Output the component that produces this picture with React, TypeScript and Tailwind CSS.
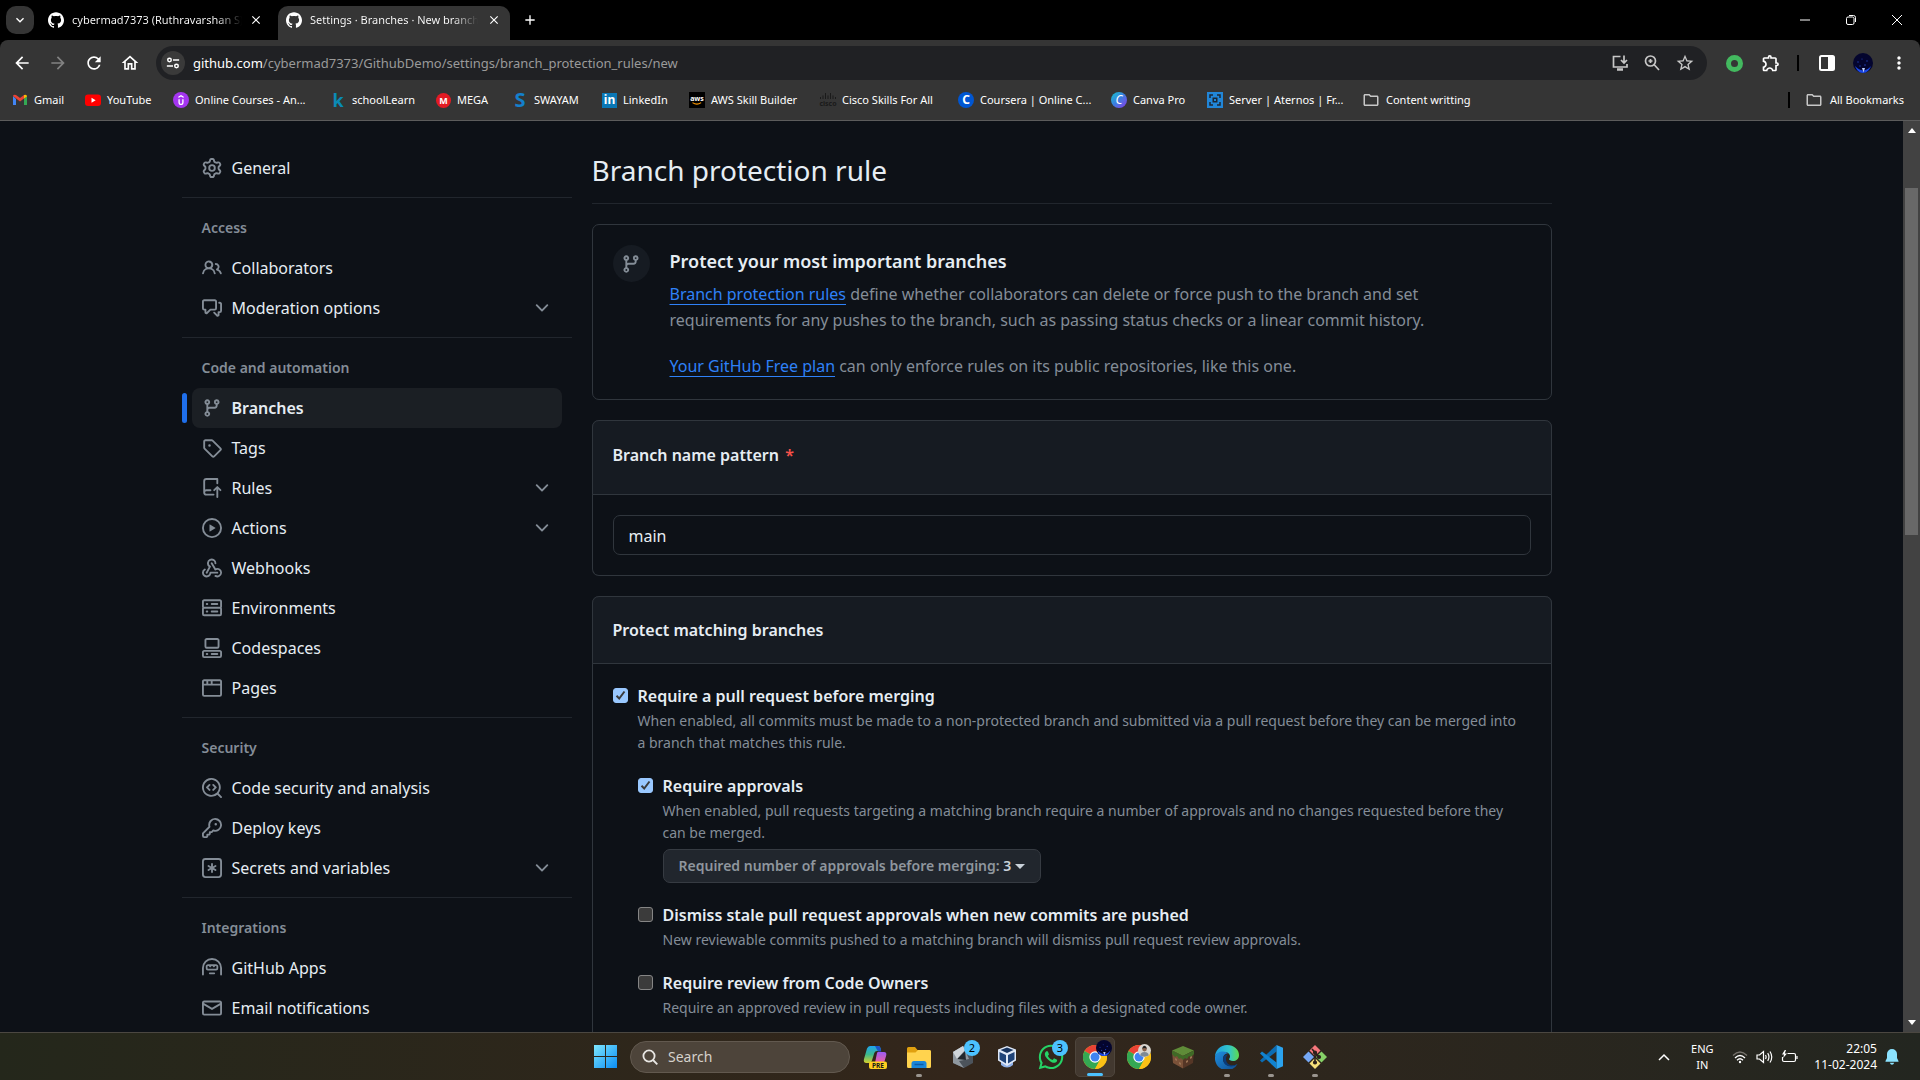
import React from "react";
import { SiGithub, SiUdemy } from "react-icons/si";
import { FaWhatsapp } from "react-icons/fa";
import {
  MdArrowBack,
  MdArrowForward,
  MdRefresh,
  MdOutlineHome,
  MdOutlineExtension,
  MdStarBorder,
  MdClose,
  MdAdd,
  MdMoreVert,
  MdExpandMore,
  MdOutlineFolder,
} from "react-icons/md";

/* ---------- sidebar icons (16 unit grid) ---------- */

const paths = {
  gear: "M8 0a8.2 8.2 0 0 1 .701.031C9.444.095 9.99.645 10.16 1.29l.288 1.107c.018.066.079.158.212.224.231.114.454.243.668.386.123.082.233.09.299.071l1.103-.303c.644-.176 1.392.021 1.82.63.27.385.506.792.704 1.218.315.675.111 1.422-.364 1.891l-.814.806c-.049.048-.098.147-.088.294.016.257.016.515 0 .772-.01.147.038.246.088.294l.814.806c.475.469.679 1.216.364 1.891a7.977 7.977 0 0 1-.704 1.217c-.428.61-1.176.807-1.82.63l-1.102-.302c-.067-.019-.177-.011-.3.071a5.909 5.909 0 0 1-.668.386c-.133.066-.194.158-.211.224l-.29 1.106c-.168.646-.715 1.196-1.458 1.26a8.006 8.006 0 0 1-1.402 0c-.743-.064-1.289-.614-1.458-1.26l-.289-1.106c-.018-.066-.079-.158-.212-.224a5.738 5.738 0 0 1-.668-.386c-.123-.082-.233-.09-.299-.071l-1.103.303c-.644.176-1.392-.021-1.82-.63a8.12 8.12 0 0 1-.704-1.218c-.315-.675-.111-1.422.363-1.891l.815-.806c.05-.048.098-.147.088-.294a6.214 6.214 0 0 1 0-.772c.01-.147-.038-.246-.088-.294l-.815-.806C.635 6.045.431 5.298.746 4.623a7.92 7.92 0 0 1 .704-1.217c.428-.61 1.176-.807 1.82-.63l1.102.302c.067.019.177.011.3-.071.214-.143.437-.272.668-.386.133-.066.194-.158.211-.224l.29-1.106C6.009.645 6.556.095 7.299.03 7.53.01 7.764 0 8 0Zm-.571 1.525c-.036.003-.108.036-.137.146l-.289 1.105c-.147.561-.549.967-.998 1.189-.173.086-.34.183-.5.29-.417.278-.97.423-1.529.27l-1.103-.303c-.109-.03-.175.016-.195.045-.22.312-.412.644-.573.99-.014.031-.021.11.059.19l.815.806c.411.406.562.957.53 1.456a4.709 4.709 0 0 0 0 .582c.032.499-.119 1.05-.53 1.456l-.815.806c-.081.08-.073.159-.059.19.162.346.353.677.573.989.02.03.085.076.195.046l1.102-.303c.56-.153 1.113-.008 1.53.27.161.107.328.204.501.29.447.222.85.629.997 1.189l.289 1.105c.029.109.101.143.137.146a6.6 6.6 0 0 0 1.142 0c.036-.003.108-.036.137-.146l.289-1.105c.147-.561.549-.967.998-1.189.173-.086.34-.183.5-.29.417-.278.97-.423 1.529-.27l1.103.303c.109.029.175-.016.195-.045.22-.313.411-.644.573-.99.014-.031.021-.11-.059-.19l-.815-.806c-.411-.406-.562-.957-.53-1.456a4.709 4.709 0 0 0 0-.582c-.032-.499.119-1.05.53-1.456l.815-.806c.081-.08.073-.159.059-.19a6.464 6.464 0 0 0-.573-.989c-.02-.03-.085-.076-.195-.046l-1.102.303c-.56.153-1.113.008-1.53-.27a4.44 4.44 0 0 0-.501-.29c-.447-.222-.85-.629-.997-1.189l-.289-1.105c-.029-.11-.101-.143-.137-.146a6.6 6.6 0 0 0-1.142 0ZM11 8a3 3 0 1 1-6 0 3 3 0 0 1 6 0ZM9.5 8a1.5 1.5 0 1 0-3.001.001A1.5 1.5 0 0 0 9.5 8Z",
  people: "M2 5.5a3.5 3.5 0 1 1 5.898 2.549 5.508 5.508 0 0 1 3.034 4.084.75.75 0 1 1-1.482.235 4 4 0 0 0-7.9 0 .75.75 0 0 1-1.482-.236A5.507 5.507 0 0 1 3.102 8.05 3.493 3.493 0 0 1 2 5.5ZM11 4a3.001 3.001 0 0 1 2.22 5.018 5.01 5.01 0 0 1 2.56 3.012.749.749 0 0 1-.885.954.752.752 0 0 1-.549-.514 3.507 3.507 0 0 0-2.522-2.372.75.75 0 0 1-.574-.73v-.352a.75.75 0 0 1 .416-.672A1.5 1.5 0 0 0 11 5.5.75.75 0 0 1 11 4Zm-5.5-.5a2 2 0 1 0-.001 3.999A2 2 0 0 0 5.5 3.5Z",
  comments: "M1.75 1h8.5c.966 0 1.75.784 1.75 1.75v5.5A1.75 1.75 0 0 1 10.25 10H7.061l-2.574 2.573A1.458 1.458 0 0 1 2 11.543V10h-.25A1.75 1.75 0 0 1 0 8.25v-5.5C0 1.784.784 1 1.75 1ZM1.5 2.75v5.5c0 .138.112.25.25.25h1a.75.75 0 0 1 .75.75v2.19l2.72-2.72a.749.749 0 0 1 .53-.22h3.5a.25.25 0 0 0 .25-.25v-5.5a.25.25 0 0 0-.25-.25h-8.5a.25.25 0 0 0-.25.25Zm13 2a.25.25 0 0 0-.25-.25h-.5a.75.75 0 0 1 0-1.5h.5c.966 0 1.75.784 1.75 1.75v5.5A1.75 1.75 0 0 1 14.25 12H14v1.543a1.458 1.458 0 0 1-2.487 1.03L9.22 12.28a.749.749 0 0 1 .326-1.275.749.749 0 0 1 .734.215l2.22 2.22v-2.19a.75.75 0 0 1 .75-.75h1a.25.25 0 0 0 .25-.25Z",
  branch: "M9.5 3.25a2.25 2.25 0 1 1 3 2.122V6A2.5 2.5 0 0 1 10 8.5H6a1 1 0 0 0-1 1v1.128a2.251 2.251 0 1 1-1.5 0V5.372a2.25 2.25 0 1 1 1.5 0v1.836A2.493 2.493 0 0 1 6 7h4a1 1 0 0 0 1-1v-.628A2.25 2.25 0 0 1 9.5 3.25Zm-6 0a.75.75 0 1 0 1.5 0 .75.75 0 0 0-1.5 0Zm8.25-.75a.75.75 0 1 0 0 1.5.75.75 0 0 0 0-1.5ZM4.25 12a.75.75 0 1 0 0 1.5.75.75 0 0 0 0-1.5Z",
  tag: "M1 7.775V2.75C1 1.784 1.784 1 2.75 1h5.025c.464 0 .91.184 1.238.513l6.25 6.25a1.75 1.75 0 0 1 0 2.474l-5.026 5.026a1.75 1.75 0 0 1-2.474 0l-6.25-6.25A1.752 1.752 0 0 1 1 7.775Zm1.5 0c0 .066.026.13.073.177l6.25 6.25a.25.25 0 0 0 .354 0l5.025-5.025a.25.25 0 0 0 0-.354l-6.25-6.25a.25.25 0 0 0-.177-.073H2.75a.25.25 0 0 0-.25.25ZM6 5a1 1 0 1 1 0 2 1 1 0 0 1 0-2Z",
  repoPush: "M1 2.5A2.5 2.5 0 0 1 3.5 0h8.75a.75.75 0 0 1 .75.75v3.5a.75.75 0 0 1-1.5 0V1.5h-8a1 1 0 0 0-1 1v6.708A2.493 2.493 0 0 1 3.5 9h3.25a.75.75 0 0 1 0 1.5H3.5a1 1 0 0 0 0 2h5.75a.75.75 0 0 1 0 1.5H3.5A2.5 2.5 0 0 1 1 11.5Zm13.23 7.79h-.001l-1.224-1.224v6.184a.75.75 0 0 1-1.5 0V9.066L10.28 10.29a.75.75 0 0 1-1.06-1.061l2.505-2.504a.75.75 0 0 1 1.06 0L15.29 9.23a.751.751 0 0 1-.018 1.042.751.751 0 0 1-1.042.018Z",
  play: "M8 0a8 8 0 1 1 0 16A8 8 0 0 1 8 0ZM1.5 8a6.5 6.5 0 1 0 13 0 6.5 6.5 0 0 0-13 0Zm4.879-2.773 4.264 2.559a.25.25 0 0 1 0 .428l-4.264 2.559A.25.25 0 0 1 6 10.559V5.442a.25.25 0 0 1 .379-.215Z",
  webhook: "M5.5 4.25a2.25 2.25 0 0 1 4.5 0 .75.75 0 0 0 1.5 0 3.75 3.75 0 1 0-6.14 2.889l-2.272 4.258a.75.75 0 0 0 1.324.706L7 7.25a.75.75 0 0 0-.309-1.015A2.25 2.25 0 0 1 5.5 4.25ZM7.364 3.607a.75.75 0 0 1 1.03.257l2.608 4.349a3.75 3.75 0 1 1-.628 6.785.75.75 0 0 1 .752-1.299 2.25 2.25 0 1 0-.033-3.88.75.75 0 0 1-1.03-.256L7.107 4.636a.75.75 0 0 1 .257-1.03ZM2.9 8.776A.75.75 0 0 1 2.625 9.8 2.25 2.25 0 1 0 6 11.75a.75.75 0 0 1 .75-.751h5.5a.75.75 0 0 1 0 1.5H7.425a3.751 3.751 0 1 1-5.55-3.998.75.75 0 0 1 1.024.274Z",
  server: "M1.75 1h12.5c.966 0 1.75.784 1.75 1.75v4c0 .372-.116.717-.314 1 .198.283.314.628.314 1v4a1.75 1.75 0 0 1-1.75 1.75H1.75A1.75 1.75 0 0 1 0 12.75v-4c0-.358.109-.707.314-1a1.739 1.739 0 0 1-.314-1v-4C0 1.784.784 1 1.75 1ZM1.5 2.75v4c0 .138.112.25.25.25h12.5a.25.25 0 0 0 .25-.25v-4a.25.25 0 0 0-.25-.25H1.75a.25.25 0 0 0-.25.25Zm.25 5.75a.25.25 0 0 0-.25.25v4c0 .138.112.25.25.25h12.5a.25.25 0 0 0 .25-.25v-4a.25.25 0 0 0-.25-.25ZM7 4.75A.75.75 0 0 1 7.75 4h4.5a.75.75 0 0 1 0 1.5h-4.5A.75.75 0 0 1 7 4.75ZM7.75 10h4.5a.75.75 0 0 1 0 1.5h-4.5a.75.75 0 0 1 0-1.5ZM3 4.75A.75.75 0 0 1 3.75 4h.5a.75.75 0 0 1 0 1.5h-.5A.75.75 0 0 1 3 4.75ZM3.75 10h.5a.75.75 0 0 1 0 1.5h-.5a.75.75 0 0 1 0-1.5Z",
  codespaces: "M0 11.25c0-.966.784-1.75 1.75-1.75h12.5c.966 0 1.75.784 1.75 1.75v3A1.75 1.75 0 0 1 14.25 16H1.75A1.75 1.75 0 0 1 0 14.25Zm2-9.5C2 .784 2.784 0 3.75 0h8.5C13.216 0 14 .784 14 1.75v5a1.75 1.75 0 0 1-1.75 1.75h-8.5A1.75 1.75 0 0 1 2 6.75Zm1.75-.25a.25.25 0 0 0-.25.25v5c0 .138.112.25.25.25h8.5a.25.25 0 0 0 .25-.25v-5a.25.25 0 0 0-.25-.25Zm-2 9.5a.25.25 0 0 0-.25.25v3c0 .138.112.25.25.25h12.5a.25.25 0 0 0 .25-.25v-3a.25.25 0 0 0-.25-.25ZM7 12.75a.75.75 0 0 1 .75-.75h4.5a.75.75 0 0 1 0 1.5h-4.5a.75.75 0 0 1-.75-.75Zm-4 0a.75.75 0 0 1 .75-.75h.5a.75.75 0 0 1 0 1.5h-.5a.75.75 0 0 1-.75-.75Z",
  browser: "M0 2.75C0 1.784.784 1 1.75 1h12.5c.966 0 1.75.784 1.75 1.75v10.5A1.75 1.75 0 0 1 14.25 15H1.75A1.75 1.75 0 0 1 0 13.25ZM14.5 6h-13v7.25c0 .138.112.25.25.25h12.5a.25.25 0 0 0 .25-.25Zm-6-3.5v2h6V2.75a.25.25 0 0 0-.25-.25ZM5 2.5v2h2v-2Zm-3.25 0a.25.25 0 0 0-.25.25V4.5h2v-2Z",
  codescan: "M8.47 4.97a.75.75 0 0 0 0 1.06L9.94 7.5 8.47 8.97a.75.75 0 1 0 1.06 1.06l2-2a.75.75 0 0 0 0-1.06l-2-2a.75.75 0 0 0-1.06 0ZM6.53 6.03a.75.75 0 0 0-1.06-1.06l-2 2a.75.75 0 0 0 0 1.06l2 2a.75.75 0 1 0 1.06-1.06L5.06 7.5l1.47-1.47ZM12.246 13.307a7.501 7.501 0 1 1 1.06-1.06l2.474 2.473a.749.749 0 0 1-.326 1.275.749.749 0 0 1-.734-.215ZM1.5 7.5a6.002 6.002 0 0 0 3.608 5.504 6.002 6.002 0 0 0 6.486-1.117.748.748 0 0 1 .292-.293A6 6 0 1 0 1.5 7.5Z",
  key: "M10.5 0a5.499 5.499 0 1 1-1.288 10.848l-.932.932a.749.749 0 0 1-.53.22H7v.75a.749.749 0 0 1-.22.53l-.5.5a.749.749 0 0 1-.53.22H5v.75a.749.749 0 0 1-.22.53l-.5.5a.749.749 0 0 1-.53.22h-2A1.75 1.75 0 0 1 0 14.25v-2c0-.199.079-.389.22-.53l4.932-4.932A5.5 5.5 0 0 1 10.5 0Zm-4 5.5c-.001.431.069.86.205 1.269a.75.75 0 0 1-.181.768L1.5 12.56v1.69c0 .138.112.25.25.25h1.69l.06-.06v-1.19a.75.75 0 0 1 .75-.75h1.19l.06-.06v-1.19a.75.75 0 0 1 .75-.75h1.19l1.023-1.025a.75.75 0 0 1 .768-.18A4 4 0 1 0 6.5 5.5ZM11 6a1 1 0 1 1 0-2 1 1 0 0 1 0 2Z",
  asterisk: "M0 2.75A2.75 2.75 0 0 1 2.75 0h10.5A2.75 2.75 0 0 1 16 2.75v10.5A2.75 2.75 0 0 1 13.25 16H2.75A2.75 2.75 0 0 1 0 13.25ZM2.75 1.5c-.69 0-1.25.56-1.25 1.25v10.5c0 .69.56 1.25 1.25 1.25h10.5c.69 0 1.25-.56 1.25-1.25V2.75c0-.69-.56-1.25-1.25-1.25ZM8 4a.75.75 0 0 1 .75.75V6.7l1.69-.975a.75.75 0 0 1 .75 1.3L9.5 8l1.69.976a.75.75 0 0 1-.75 1.298L8.75 9.3v1.951a.75.75 0 0 1-1.5 0V9.299l-1.69.976a.75.75 0 0 1-.75-1.3L6.5 8l-1.69-.975a.75.75 0 0 1 .75-1.3l1.69.976V4.75A.75.75 0 0 1 8 4Z",
  hubot: "M0 8a8 8 0 1 1 16 0v5.25a.75.75 0 0 1-1.5 0V8a6.5 6.5 0 1 0-13 0v5.25a.75.75 0 0 1-1.5 0V8Zm5.5 4.25a.75.75 0 0 1 .75-.75h3.5a.75.75 0 0 1 0 1.5h-3.5a.75.75 0 0 1-.75-.75ZM3 6.75C3 5.784 3.784 5 4.75 5h6.5c.966 0 1.75.784 1.75 1.75v1.5A1.75 1.75 0 0 1 11.25 10h-6.5A1.75 1.75 0 0 1 3 8.25Zm1.75-.35a.35.35 0 0 0-.35.35v1.5c0 .193.157.35.35.35h6.5a.35.35 0 0 0 .35-.35v-1.5a.35.35 0 0 0-.35-.35h-.55l-1.2 1.2-1.2-1.2h-.6l-1.2 1.2-1.2-1.2Z",
  mail: "M1.75 2h12.5c.966 0 1.75.784 1.75 1.75v8.5A1.75 1.75 0 0 1 14.25 14H1.75A1.75 1.75 0 0 1 0 12.25v-8.5C0 2.784.784 2 1.75 2ZM1.5 12.251c0 .138.112.25.25.25h12.5a.25.25 0 0 0 .25-.25V5.809L8.38 9.397a.75.75 0 0 1-.76 0L1.5 5.809v6.442Zm13-8.181v-.32a.25.25 0 0 0-.25-.25H1.75a.25.25 0 0 0-.25.25v.32L8 7.88Z",
  chevron: "M12.78 5.22a.749.749 0 0 1 0 1.06l-4.25 4.25a.749.749 0 0 1-1.06 0L3.22 6.28a.749.749 0 1 1 1.06-1.06L8 8.939l3.72-3.719a.749.749 0 0 1 1.06 0Z",
};

type IconName = keyof typeof paths;

function Icon({ name, className = "size-5" }: { name: IconName; className?: string }) {
  return (
    <svg viewBox="0 0 16 16" fill="currentColor" fillRule="evenodd" className={`shrink-0 ${className}`} aria-hidden="true">
      {name === "webhook" ? (
        paths.webhook.split(/(?<=Z)/).map((d) => <path key={d} d={d} />)
      ) : (
        <path d={paths[name]} />
      )}
    </svg>
  );
}

/* ---------- browser chrome ---------- */

function TabStrip() {
  return (
    <div className="flex h-10 items-center bg-black pl-[6px] text-white">
      <button aria-label="Search tabs" className="flex size-7 shrink-0 items-center justify-center rounded-[10px] bg-[#353535]">
        <MdExpandMore className="size-4" />
      </button>
      <div className="ml-[14px] flex w-[230px] shrink-0 items-center">
        <SiGithub className="size-4 shrink-0" />
        <span className="ml-2 w-[170px] overflow-hidden bg-gradient-to-r from-white from-85% to-transparent bg-clip-text text-[11px] leading-4 whitespace-nowrap text-transparent">
          cybermad7373 (Ruthravarshan S)
        </span>
        <button aria-label="Close tab" className="ml-[7px]">
          <MdClose className="size-[14px]" />
        </button>
      </div>
      <div className="flex h-[34px] w-[232px] shrink-0 items-center self-end rounded-t-[10px] bg-[#353535] pb-[6px] pl-2">
        <SiGithub className="size-4 shrink-0" />
        <span className="ml-2 w-[168px] overflow-hidden bg-gradient-to-r from-white from-85% to-transparent bg-clip-text text-[11px] leading-4 whitespace-nowrap text-transparent">
          Settings · Branches · New branch
        </span>
        <button aria-label="Close tab" className="ml-[9px]">
          <MdClose className="size-[14px]" />
        </button>
      </div>
      <button aria-label="New tab" className="ml-3">
        <MdAdd className="size-4" />
      </button>
      <div className="ml-auto flex items-center gap-[34px] pr-[17px]">
        <button aria-label="Minimize">
          <svg viewBox="0 0 12 12" className="size-3"><path d="M1 6h10" stroke="#fff" /></svg>
        </button>
        <button aria-label="Restore">
          <svg viewBox="0 0 12 12" className="size-3" fill="none" stroke="#fff"><rect x="1.5" y="3" width="7.5" height="7.5" rx="1.5" /><path d="M4 1.5h4.5a2 2 0 0 1 2 2V8" /></svg>
        </button>
        <button aria-label="Close">
          <svg viewBox="0 0 12 12" className="size-3" stroke="#fff"><path d="m1 1 10 10M11 1 1 11" /></svg>
        </button>
      </div>
    </div>
  );
}

function Toolbar() {
  return (
    <div className="bg-black">
      <div className="flex h-[46px] items-center rounded-t-lg bg-[#353535] pl-3 text-[#e8e8e8]">
        <div className="flex w-36 items-center gap-4">
          <button aria-label="Back"><MdArrowBack className="size-5 text-white" /></button>
          <button aria-label="Forward"><MdArrowForward className="size-5 text-[#828282]" /></button>
          <button aria-label="Reload"><MdRefresh className="size-5 text-white" /></button>
          <button aria-label="Home"><MdOutlineHome className="size-5 text-white" /></button>
        </div>
        <div className="flex h-[34px] flex-1 items-center rounded-full bg-[#202124] pr-3 pl-[5px]">
          <button aria-label="Site information" className="flex size-6 items-center justify-center rounded-full bg-[#3a3a3a]">
            <svg viewBox="0 0 16 16" className="size-[14px]" fill="none" stroke="#fff" strokeWidth="1.7">
              <circle cx="4" cy="4.5" r="2" /><path d="M8 4.5h7M1 11.5h7" /><circle cx="12" cy="11.5" r="2" />
            </svg>
          </button>
          <input
            aria-label="Address"
            className="sr-only"
            readOnly
            tabIndex={-1}
            value="github.com/cybermad7373/GithubDemo/settings/branch_protection_rules/new"
          />
          <span className="ml-2 text-[13px] leading-5 whitespace-nowrap text-[#9a9a9a]" aria-hidden="true">
            <span className="text-white">github.com</span>/cybermad7373/GithubDemo/settings/branch_protection_rules/new
          </span>
          <div className="ml-auto flex items-center gap-[14px] text-[#c7c7c7]">
            <button aria-label="Install app">
              <svg viewBox="0 0 18 18" className="size-[18px]" fill="none" stroke="currentColor" strokeWidth="1.7">
                <path d="M9.5 2.5H2.5v10.500h13.500V10M13 1.500v7M10 6l3 3 3-3" /><path d="M6 15.500h6" strokeWidth="2.5" />
              </svg>
            </button>
            <button aria-label="Zoom">
              <svg viewBox="0 0 18 18" className="size-[18px]" fill="none" stroke="currentColor" strokeWidth="1.7">
                <circle cx="7.5" cy="7" r="5" /><path d="m11 10.500 5 5.500M5.500 7h4M7.500 5v4" />
              </svg>
            </button>
            <button aria-label="Bookmark this tab"><MdStarBorder className="size-5" /></button>
          </div>
        </div>
        <div className="flex w-[213px] items-center pl-[19px]">
          <button aria-label="Extension"><span className="block size-[17px] rounded-full border-[5px] border-[#43b95f] bg-[#353535]" /></button>
          <button aria-label="Extensions" className="ml-[18px]"><MdOutlineExtension className="size-5 text-white" /></button>
          <span className="ml-4 h-4 w-[2px] bg-black" />
          <button aria-label="Side panel" className="ml-5">
            <svg viewBox="0 0 16 16" className="size-4"><rect x="1" y="1" width="14" height="14" rx="1.5" fill="none" stroke="#fff" strokeWidth="2" /><path d="M9 1h6v14H9z" fill="#fff" /></svg>
          </button>
          <button aria-label="Profile" className="ml-[18px]"><NightAvatar className="size-5" /></button>
          <button aria-label="Menu" className="ml-4"><MdMoreVert className="size-5 text-white" /></button>
        </div>
      </div>
    </div>
  );
}

function NightAvatar({ className }: { className: string }) {
  return (
    <svg viewBox="0 0 20 20" className={className} aria-hidden="true">
      <circle cx="10" cy="10" r="10" fill="#04052e" />
      <path d="M2 13c3 3 5 4 8 4.500 4-.5 6-2 8-4.500-1.500 4-4 7-8 7s-6.500-3-8-7Z" fill="#1b49e8" />
      <path d="m9 15 1.500 4.500L12 15Z" fill="#bcd0ff" />
      <g fill="#2342b8"><circle cx="5" cy="9" r=".7" /><circle cx="9" cy="6" r=".6" /><circle cx="14" cy="8" r=".7" /><circle cx="12" cy="12" r=".8" /><circle cx="7" cy="13" r=".7" /></g>
    </svg>
  );
}

const gmail = (
  <svg viewBox="0 0 16 16" className="size-4">
    <path d="M1 4v9h3V7z" fill="#4285f4" /><path d="M12 7v6h3V4z" fill="#34a853" />
    <path d="m1 4 7 5.500V6L4 3Q1.500 2 1 4Z" fill="#ea4335" /><path d="m12 3-4 3v3.500L12 6.500z" fill="#ea4335" /><path d="M12 3v3.700L15 4.400Q15 2 12 3Z" fill="#fbbc04" />
  </svg>
);
const youtube = (
  <svg viewBox="0 0 16 16" className="size-4"><rect y="2.5" width="16" height="11.5" rx="3" fill="#f00" /><path d="m6.500 5.700 4.200 2.500-4.200 2.500z" fill="#fff" /></svg>
);
const udemy = (
  <span className="flex size-4 items-center justify-center rounded-full bg-[#a435f0]"><SiUdemy className="size-[10px] text-white" /></span>
);
const kIcon = <span className="w-4 text-center text-lg leading-4 font-bold text-[#0a8ab5]">k</span>;
const mega = <span className="flex size-[15px] items-center justify-center rounded-full bg-[#e31b23] text-[9px] leading-none font-bold text-white">M</span>;
const swayam = <span className="w-4 text-center text-xl leading-4 font-bold text-[#1480cc]">S</span>;
const linkedin = <span className="flex size-[15px] items-center justify-center bg-[#0a77b5] text-xs leading-none font-bold text-white">in</span>;
const aws = (
  <span className="flex size-4 flex-col items-center justify-center bg-black text-[7px] leading-[7px] font-bold text-white">
    aws
    <svg viewBox="0 0 12 4" className="h-[3px] w-3" fill="none" stroke="#f90" strokeWidth="1.5"><path d="M0 .8Q6 5 11.500.8" /></svg>
  </span>
);
const cisco = (
  <span className="flex size-4 flex-col items-center justify-center text-[7px] leading-[7px] font-bold text-[#1a1a1a]">
    <svg viewBox="0 0 16 7" className="h-[7px] w-4" stroke="#1a1a1a"><path d="M.5 4v2M3 2.500V6M5.500 0v6M8 2.500V6M10.500 0v6M13 2.500V6M15.500 4v2" /></svg>
    cisco
  </span>
);
const coursera = <span className="flex size-4 items-center justify-center rounded-full bg-[#0056d2] text-xs leading-none font-bold text-white">C</span>;
const canva = <span className="flex size-4 items-center justify-center rounded-full bg-gradient-to-br from-[#00c4cc] via-[#3a7be0] to-[#7d2ae8] text-xs leading-none text-white italic">C</span>;
const aternos = (
  <svg viewBox="0 0 16 16" className="size-4"><path fill="#2186d8" d="M0 0h16v16H0z" /><path d="M3 6V3h3M10 3h3v3M13 10v3h-3M6 13H3v-3" fill="none" stroke="#1c2733" strokeWidth="1.5" /><path d="M5.500 5.500h5v5h-5z" fill="#1c2733" /><path d="M7 7h2v2H7z" fill="#2186d8" /></svg>
);
const folder = <MdOutlineFolder className="size-[18px] text-[#c7c7c7]" />;

const bookmarks = [
  { label: "Gmail", icon: gmail, width: "w-[73px]" },
  { label: "YouTube", icon: youtube, width: "w-[88px]" },
  { label: "Online Courses - An...", icon: udemy, width: "w-[157px]" },
  { label: "schoolLearn", icon: kIcon, width: "w-[106px]" },
  { label: "MEGA", icon: mega, width: "w-[76px]" },
  { label: "SWAYAM", icon: swayam, width: "w-[90px]" },
  { label: "LinkedIn", icon: linkedin, width: "w-[87px]" },
  { label: "AWS Skill Builder", icon: aws, width: "w-[131px]" },
  { label: "Cisco Skills For All", icon: cisco, width: "w-[138px]" },
  { label: "Coursera | Online C...", icon: coursera, width: "w-[153px]" },
  { label: "Canva Pro", icon: canva, width: "w-[96px]" },
  { label: "Server | Aternos | Fr...", icon: aternos, width: "w-[155px]" },
  { label: "Content writting", icon: folder, width: "w-[130px]" },
];

function BookmarksBar() {
  return (
    <nav aria-label="Bookmarks" className="flex h-[35px] items-center border-b border-[#5c5c5c] bg-[#353535] pb-[6px] pl-3 text-[11px] text-white">
      {bookmarks.map((b) => (
        <a key={b.label} href="#" className={`flex shrink-0 items-center gap-[6px] whitespace-nowrap ${b.width}`}>
          {b.icon}
          {b.label}
        </a>
      ))}
      <div className="ml-auto flex items-center pr-4">
        <span className="h-4 w-[2px] bg-black" />
        <a href="#" className="ml-[15px] flex items-center gap-[7px] whitespace-nowrap">
          {folder}
          All Bookmarks
        </a>
      </div>
    </nav>
  );
}

/* ---------- settings sidebar ---------- */

type NavItem = { label: string; icon: IconName; expandable?: boolean; current?: boolean };

const sections: { title: string; items: NavItem[] }[] = [
  {
    title: "Access",
    items: [
      { label: "Collaborators", icon: "people" },
      { label: "Moderation options", icon: "comments", expandable: true },
    ],
  },
  {
    title: "Code and automation",
    items: [
      { label: "Branches", icon: "branch", current: true },
      { label: "Tags", icon: "tag" },
      { label: "Rules", icon: "repoPush", expandable: true },
      { label: "Actions", icon: "play", expandable: true },
      { label: "Webhooks", icon: "webhook" },
      { label: "Environments", icon: "server" },
      { label: "Codespaces", icon: "codespaces" },
      { label: "Pages", icon: "browser" },
    ],
  },
  {
    title: "Security",
    items: [
      { label: "Code security and analysis", icon: "codescan" },
      { label: "Deploy keys", icon: "key" },
      { label: "Secrets and variables", icon: "asterisk", expandable: true },
    ],
  },
  {
    title: "Integrations",
    items: [
      { label: "GitHub Apps", icon: "hubot" },
      { label: "Email notifications", icon: "mail" },
    ],
  },
];

function SidebarItem({ item }: { item: NavItem }) {
  const box = "flex h-10 w-full items-center gap-[10px] rounded-lg px-[10px] text-left text-base text-[#e6edf3]";
  const content = (
    <>
      <Icon name={item.icon} className="size-5 text-[#848d97]" />
      <span className={item.current ? "font-semibold" : ""}>{item.label}</span>
      {item.expandable && <Icon name="chevron" className="ml-auto size-5 text-[#848d97]" />}
    </>
  );
  return (
    <li className="flex items-center gap-[5px] pr-[10px]">
      <span className={item.current ? "h-[30px] w-[5px] shrink-0 rounded-lg bg-[#1f6feb]" : "w-[5px] shrink-0"} />
      {item.expandable ? (
        <button className={box} aria-expanded="false">{content}</button>
      ) : (
        <a href="#" aria-current={item.current ? "page" : undefined} className={item.current ? `${box} bg-[#1b1f24]` : box}>
          {content}
        </a>
      )}
    </li>
  );
}

function Sidebar() {
  return (
    <nav aria-label="Repository settings" className="w-[390px] shrink-0 pt-[27px]">
      <ul>
        <SidebarItem item={{ label: "General", icon: "gear" }} />
      </ul>
      {sections.map((s) => (
        <section key={s.title} className="mt-[9px] border-t border-[#21262d] pt-[10px]">
          <h2 className="flex h-10 items-center pl-5 text-sm font-semibold text-[#848d97]">{s.title}</h2>
          <ul>
            {s.items.map((i) => (
              <SidebarItem key={i.label} item={i} />
            ))}
          </ul>
        </section>
      ))}
    </nav>
  );
}

/* ---------- main form ---------- */

type RuleProps = { id: string; title: string; checked?: boolean; text: React.ReactNode; children?: React.ReactNode };

function Rule({ id, title, checked = false, text, children }: RuleProps) {
  return (
    <div className="flex items-start gap-[10px]">
      <span className="relative mt-[4px] size-[15px] shrink-0">
        <input
          id={id}
          type="checkbox"
          defaultChecked={checked}
          className="peer block size-[15px] appearance-none rounded-[3px] border border-[#858585] bg-[#3b3b3b] checked:border-[#99c8ff] checked:bg-[#99c8ff]"
        />
        <svg viewBox="0 0 15 15" className="pointer-events-none absolute inset-0 hidden size-[15px] peer-checked:block" fill="none" stroke="#3b3b3b" strokeWidth="2">
          <path d="m3.500 7.800 2.700 2.700 5.300-7" />
        </svg>
      </span>
      <div className="min-w-0 flex-1">
        <label htmlFor={id} className="block text-base leading-6 font-semibold text-[#e6edf3]">{title}</label>
        <p className="mt-[2px] text-sm leading-[22px] text-[#848d97]">{text}</p>
        {children}
      </div>
    </div>
  );
}

function BoxHeader({ className, children }: { className: string; children: React.ReactNode }) {
  return (
    <div className={`-mx-px rounded-t-[7px] border border-[#30363d] bg-[#161b22] px-5 text-base font-semibold text-[#e6edf3] ${className}`}>
      {children}
    </div>
  );
}

function Main() {
  return (
    <main className="max-w-[960px] min-w-0 flex-1 pt-[27px]">
      <h1 className="border-b border-[#21262d] pb-[10px] text-[28px] leading-[45px] text-[#e6edf3]">Branch protection rule</h1>

      <section className="mt-5 flex gap-5 rounded-[7px] border border-[#30363d] p-5">
        <span className="flex size-[37px] shrink-0 items-center justify-center rounded-full bg-[#161b22]">
          <Icon name="branch" className="size-5 text-[#848d97]" />
        </span>
        <div className="text-base leading-[26px] text-[#848d97]">
          <h2 className="mb-1 text-lg leading-8 font-semibold text-[#e6edf3]">Protect your most important branches</h2>
          <p>
            <a href="#" className="text-[#2f81f7] underline underline-offset-4">Branch protection rules</a> define whether collaborators can delete or force push to the branch and set
            <br />
            requirements for any pushes to the branch, such as passing status checks or a linear commit history.
          </p>
          <p className="mt-5">
            <a href="#" className="text-[#2f81f7] underline underline-offset-4">Your GitHub Free plan</a> can only enforce rules on its public repositories, like this one.
          </p>
        </div>
      </section>

      <section className="mt-5 rounded-[7px] border border-t-0 border-[#30363d]">
        <BoxHeader className="h-[75px] pt-[22px]">
          <label htmlFor="pattern">
            Branch name pattern <span className="ml-[2px] text-[#f85149]">*</span>
          </label>
        </BoxHeader>
        <div className="px-5 py-5">
          <input
            id="pattern"
            type="text"
            defaultValue="main"
            className="block h-10 w-full rounded-[7px] border border-[#30363d] bg-[#0d1117] px-[15px] pt-[2px] text-base text-[#e6edf3]"
          />
        </div>
      </section>

      <section className="mt-5 rounded-[7px] border border-t-0 border-[#30363d]">
        <BoxHeader className="flex h-[68px] items-center">
          <h2>Protect matching branches</h2>
        </BoxHeader>
        <div className="px-5 pt-5 pb-10">
          <Rule
            id="require-pr"
            checked
            title="Require a pull request before merging"
            text={
              <>
                When enabled, all commits must be made to a non-protected branch and submitted via a pull request before they can be merged into
                <br />
                a branch that matches this rule.
              </>
            }
          >
            <div className="mt-5 flex flex-col gap-5">
              <Rule
                id="require-approvals"
                checked
                title="Require approvals"
                text={
                  <>
                    When enabled, pull requests targeting a matching branch require a number of approvals and no changes requested before they
                    <br />
                    can be merged.
                  </>
                }
              >
                <button className="mt-[5px] flex h-[34px] items-center rounded-[7px] border border-[#363b42] bg-[#21262d] px-[15px] text-sm font-semibold text-[#8f969e]">
                  Required number of approvals before merging:&nbsp;<span className="text-[#c9d1d9]">3</span>
                  <span className="ml-1 border-x-[5px] border-t-[5px] border-x-transparent border-t-[#c9d1d9]" />
                </button>
              </Rule>
              <Rule
                id="dismiss-stale"
                title="Dismiss stale pull request approvals when new commits are pushed"
                text="New reviewable commits pushed to a matching branch will dismiss pull request review approvals."
              />
              <Rule
                id="code-owners"
                title="Require review from Code Owners"
                text="Require an approved review in pull requests including files with a designated code owner."
              />
            </div>
          </Rule>
        </div>
      </section>
    </main>
  );
}

function Scrollbar() {
  return (
    <div className="flex w-[17px] shrink-0 flex-col items-center bg-[#424242] py-[7px]" aria-hidden="true">
      <span className="border-x-[4px] border-b-[5px] border-x-transparent border-b-white" />
      <span className="mt-[55px] h-[347px] w-[13px] bg-[#686868]" />
      <span className="mt-auto border-x-[4px] border-t-[5px] border-x-transparent border-t-white" />
    </div>
  );
}

/* ---------- taskbar ---------- */

function ChromeLogo() {
  return (
    <svg viewBox="0 0 24 24" className="size-6">
      <circle cx="12" cy="12" r="12" fill="#fbc116" />
      <path d="M12 12 1.600 6A12 12 0 0 1 22.400 6Z" fill="#ea4335" />
      <path d="M12 12 1.600 6A12 12 0 0 0 12 24l5-9Z" fill="#34a853" />
      <path d="M12 6.500h10.700a12 12 0 0 1-10.700 17.500l5-9Z" fill="#fbc116" />
      <circle cx="12" cy="12" r="5.7" fill="#fff" /><circle cx="12" cy="12" r="4.5" fill="#3f83f1" />
    </svg>
  );
}

const copilot = (
  <svg viewBox="0 0 24 24" className="size-6">
    <defs>
      <linearGradient id="cpA" x1="0" y1="0" x2="0" y2="1"><stop offset="0" stopColor="#1fa5f0" /><stop offset=".5" stopColor="#3cb98c" /><stop offset="1" stopColor="#d6d02c" /></linearGradient>
      <linearGradient id="cpB" x1="0" y1="0" x2="0" y2="1"><stop offset="0" stopColor="#9b5cf5" /><stop offset="1" stopColor="#f0609a" /></linearGradient>
    </defs>
    <path d="M7 1h8q2 0 2.500 2l.5 3h-4q-2 0-2.700 2l-2.500 8q-.8 2-2.800 2H3.500Q0 18 1 14L4 3.500Q5 1 7 1Z" fill="url(#cpA)" />
    <path d="M12 1h3q2 0 2.500 2l.8 3.500H15z" fill="#1b55c9" />
    <path d="M15 7h6q3 0 2.200 3.500L21 18h-9l1.800-9Q14 7 15 7Z" fill="url(#cpB)" />
    <rect x="6" y="16.5" width="18" height="7.5" rx="2" fill="#ffcf1f" />
    <text x="15" y="22.8" textAnchor="middle" fontSize="6.5" fontWeight="700" fill="#1a1a1a">PRE</text>
  </svg>
);
const explorer = (
  <svg viewBox="0 0 24 24" className="size-6">
    <path d="M0 3.500Q0 2 1.500 2H8l2.500 3H22q2 0 2 2v6H0z" fill="#e0a00f" /><path d="M0 7.500h8.500L11 5h11.500Q24 5 24 6.500v15q0 1.500-1.500 1.500h-21Q0 23 0 21.500z" fill="#ffd34e" />
    <path d="M4.500 23v-4.500q0-2.500 2.500-2.500h10q2.500 0 2.500 2.500V23z" fill="#1a86d9" /><path d="M7.500 19.500h9" stroke="#0d5ba6" strokeWidth="1.5" />
  </svg>
);
const cube = (
  <svg viewBox="0 0 24 24" className="size-6"><path d="m12 1 10 5v12l-9 5-11-5V7z" fill="#4c535b" /><path d="M12 1 2 7v11l11 5-5-7 10-2-4-9z" fill="#8f979f" /><path d="m14 6-8 8 9 1z" fill="#23282d" /><path d="m2 7 4 7 8-9-2-4z" fill="#cfd5da" /></svg>
);
const virtualbox = (
  <svg viewBox="0 0 24 24" className="size-6"><path d="M6 16h12v4q-6 5-12 0z" fill="#8fb0e8" /><path d="m12 1 9 3.500v11L12 21l-9-5.500v-11z" fill="#dfe8f7" /><path d="m12 2.500 6.500 2.500L12 8 5.500 5z" fill="#16335f" /><path d="M4.500 7 11 10v8.500L4.500 14.500zM19.500 7 13 10v8.500l6.500-4z" fill="#1e4379" /></svg>
);
const minecraft = (
  <svg viewBox="0 0 24 24" className="size-6"><path d="m12 1 11 4.500L12 11 1 5.500z" fill="#5f8c38" /><path d="M1 5.500 12 11v12.500L2 18z" fill="#7a5138" /><path d="M23 5.500 12 11v12.500L22 18z" fill="#553626" /><path d="m1 5.500 11 5.500v4l-2-2-2 1-2-3-2 1-3-3zM23 5.500 12 11v4l2-2 2 1 2-3 2 1 3-3z" fill="#3f6a26" /><path d="m4 13 2 1v2l-2-1zM8 17l2 1v2l-2-1zM15 16l2-1v2l-2 1zM19 12l2-1v2l-2 1z" fill="#9a7353" /></svg>
);
const edge = (
  <svg viewBox="0 0 24 24" className="size-6">
    <defs>
      <linearGradient id="edA" x1="0" y1="0" x2="1" y2="0"><stop offset="0" stopColor="#1e9de0" /><stop offset=".6" stopColor="#33c6c8" /><stop offset="1" stopColor="#5fdc4a" /></linearGradient>
      <linearGradient id="edB" x1="0" y1="0" x2="1" y2="1"><stop offset="0" stopColor="#1e8fe0" /><stop offset="1" stopColor="#114a8b" /></linearGradient>
    </defs>
    <path d="M0 12C0 5 5.500 0 12 0c7 0 12 4.500 12 10 0 4-3 6-6 6-2.500 0-4-1-4-1.700 0-.6 1-1 1-3C15 8.500 12 7 9 7c-4 0-8 2-9 5Z" fill="url(#edA)" />
    <path d="M0 12c1-3.500 4-5.500 8-5.500 2.500 0 4 .8 5 2C9.500 8.500 8 11 8 14c0 4 3.500 7 8 7 2.500 0 4.500-.8 6.500-2A12 12 0 0 1 0 12Z" fill="url(#edB)" />
    <path d="M8 14c0 4.500 3.500 7.500 8 7.500 2.300 0 4.200-.8 5.800-2-1.500.6-2.800.8-4.300.8-4 0-6.500-2.800-6.500-6.300 0-2 .8-3.500 2-4.500C10 9.500 8 11 8 14Z" fill="#0b3a76" />
  </svg>
);
const vscode = (
  <svg viewBox="0 0 24 24" className="size-6">
    <path d="M1 15.500 17.500 0v6.500L3 17.500z" fill="#0b6cb3" />
    <path d="m1 8.500 2-2 14.500 11V24z" fill="#1183d0" />
    <path d="M17.500 0 24 2.800v18.400L17.500 24z" fill="#2ba3ef" />
  </svg>
);
const git = (
  <svg viewBox="0 0 24 24" className="size-6"><path d="m12 0 5.500 5.500L12 11 6.500 5.500z" fill="#f6777c" /><path d="m5.500 6.500 5.500 5.500-5.500 5.500L0 12z" fill="#76a8f5" /><path d="m18.500 6.500 5.500 5.500-5.500 5.500L13 12z" fill="#86d067" /><path d="m12 13 5.500 5.500L12 24l-5.500-5.500z" fill="#f7e07a" /><g stroke="#2b211c" strokeWidth="1.6" fill="#2b211c"><path d="M12 7v11M9 4l7 8" fill="none" /><circle cx="12" cy="7.5" r="1.3" /><circle cx="16" cy="12" r="1.3" /><circle cx="12" cy="17.5" r="1.3" /></g></svg>
);
const portrait = (
  <svg viewBox="0 0 14 14" className="size-[13px]"><circle cx="7" cy="7" r="7" fill="#d9d6d0" /><circle cx="7" cy="5.5" r="2.5" fill="#8a624c" /><path d="M4.500 5q.5-3 2.500-3t2.500 3Q7 3.500 4.500 5Z" fill="#222" /><path d="M2.500 12.500q0-4 4.500-4t4.500 4Q7 15 2.500 12.500Z" fill="#7f8a94" /></svg>
);

type TaskApp = { label: string; icon: React.ReactNode; badge?: string; avatar?: React.ReactNode; state?: "running" | "active" };

const apps: TaskApp[] = [
  { label: "Copilot", icon: copilot },
  { label: "File Explorer", icon: explorer, state: "running" },
  { label: "Game launcher", icon: cube, badge: "2" },
  { label: "VirtualBox", icon: virtualbox },
  { label: "WhatsApp", icon: <FaWhatsapp className="size-7 text-[#25d366]" />, badge: "3" },
  { label: "Chrome", icon: <ChromeLogo />, avatar: <NightAvatar className="size-4" />, state: "active" },
  { label: "Chrome, second profile", icon: <ChromeLogo />, avatar: portrait },
  { label: "Minecraft", icon: minecraft },
  { label: "Edge", icon: edge, state: "running" },
  { label: "Visual Studio Code", icon: vscode, state: "running" },
  { label: "Git", icon: git, state: "running" },
];

function Taskbar() {
  return (
    <footer className="grid h-12 shrink-0 grid-cols-[1fr_auto_1fr] items-center border-t border-[#4b4741] bg-gradient-to-r from-[#24271b] via-[#33261b] to-[#232620] text-white">
      <span />
      <div className="flex h-[47px] items-center">
        <button aria-label="Start" className="flex w-11 justify-center">
          <svg viewBox="0 0 23 23" className="size-[23px]">
            <defs><linearGradient id="win" x1="0" y1="0" x2="1" y2="1"><stop offset="0" stopColor="#7ee6fd" /><stop offset="1" stopColor="#0a8df5" /></linearGradient></defs>
            <path d="M0 0h11v11H0zM12 0h11v11H12zM0 12h11v11H0zM12 12h11v11H12z" fill="url(#win)" />
          </svg>
        </button>
        <label className="mx-[3px] flex h-8 w-[220px] items-center rounded-full border border-[#62594f] bg-[#4d443a] pl-[11px]">
          <svg viewBox="0 0 16 16" className="size-4" fill="none" stroke="#e8e6e3" strokeWidth="1.8"><circle cx="7" cy="7" r="5.6" /><path d="m11 11 4.300 4.300" /></svg>
          <input type="text" aria-label="Search" placeholder="Search" className="ml-[10px] w-40 bg-transparent text-sm placeholder:text-[#d5d1cc] placeholder:opacity-100" />
        </label>
        {apps.map((a) => (
          <button
            key={a.label}
            aria-label={a.label}
            className={
              a.state === "active"
                ? "relative mx-[2px] flex h-10 w-10 items-center justify-center rounded-[5px] border border-[#4e453c] bg-[#42382f]"
                : "relative mx-[2px] flex h-10 w-10 items-center justify-center"
            }
          >
            {a.icon}
            {a.badge && (
              <span className="absolute top-[3px] right-[3px] flex size-4 items-center justify-center rounded-full bg-[#4cc2ff] text-[11px] leading-none text-black">{a.badge}</span>
            )}
            {a.avatar && <span className={a.state === "active" ? "absolute top-[2px] right-[2px]" : "absolute top-[7px] right-2"}>{a.avatar}</span>}
            {a.state === "active" && <span className="absolute bottom-0 h-[3px] w-4 rounded-full bg-[#4cc2ff]" />}
            {a.state === "running" && <span className="absolute bottom-0 h-[3px] w-[6px] rounded-full bg-[#9a958f]" />}
          </button>
        ))}
      </div>
      <div className="flex items-center justify-end pr-[21px] text-xs leading-4">
        <button aria-label="Show hidden icons">
          <svg viewBox="0 0 12 8" className="h-2 w-3" fill="none" stroke="#fff" strokeWidth="1.5"><path d="m1 7 5-5 5 5" /></svg>
        </button>
        <button className="ml-5 w-6 text-center text-[11px] leading-4">ENG<br />IN</button>
        <button aria-label="Network, volume and battery" className="ml-[18px] flex items-center gap-2">
          <svg viewBox="0 0 16 14" className="h-[14px] w-4" fill="none" stroke="#fff" strokeWidth="1.3">
            <path d="M1 5.500q7-7 14 0" stroke="#77736d" /><path d="M3 8q5-5 10 0M5 10.300q3-3 6 0" /><circle cx="8" cy="12" r="1.2" fill="#fff" stroke="none" />
          </svg>
          <svg viewBox="0 0 17 14" className="h-[14px] w-[17px]" fill="none" stroke="#fff" strokeWidth="1.2"><path d="M1 5v4h2.500L7.500 12.500v-11L3.500 5zM9.500 5q1.200 2 0 4M11.700 3.200q2.500 3.800 0 7.600M14 1.500q3.500 5.500 0 11" /></svg>
          <svg viewBox="0 0 17 14" className="h-[14px] w-[17px]" fill="none" stroke="#fff" strokeWidth="1.2"><path d="M6.500 3.500H13q1.500 0 1.500 1.500v5q0 1.500-1.500 1.500H3Q1.500 11.500 1.500 10V7M16 6v3" /><path d="M3.800 0 1 4.500h2L2.200 8 6 3.500H3.800L5 0z" fill="#fff" stroke="none" /></svg>
        </button>
        <button className="ml-4 text-right">22:05<br />11-02-2024</button>
        <button aria-label="Notifications" className="ml-2">
          <svg viewBox="0 0 14 16" className="h-4 w-[14px]" fill="#8be3ff"><path d="M7 0a5 5 0 0 1 5 5v4l1.500 3v.8h-13V12L2 9V5a5 5 0 0 1 5-5ZM4.800 13.800h4.400Q8.500 15.800 7 15.800t-2.200-2Z" /></svg>
        </button>
      </div>
    </footer>
  );
}

export default function App() {
  return (
    <div className="flex h-screen flex-col overflow-hidden bg-[#0d1117] [font-family:'Noto_Sans','Open_Sans',sans-serif]">
      <header>
        <TabStrip />
        <Toolbar />
        <BookmarksBar />
      </header>
      <div className="flex min-h-0 flex-1">
        <div className="min-w-0 flex-1 overflow-hidden">
          <div className="mx-auto flex max-w-[1600px] gap-5 px-[30px]">
            <Sidebar />
            <Main />
          </div>
        </div>
        <Scrollbar />
      </div>
      <Taskbar />
    </div>
  );
}
